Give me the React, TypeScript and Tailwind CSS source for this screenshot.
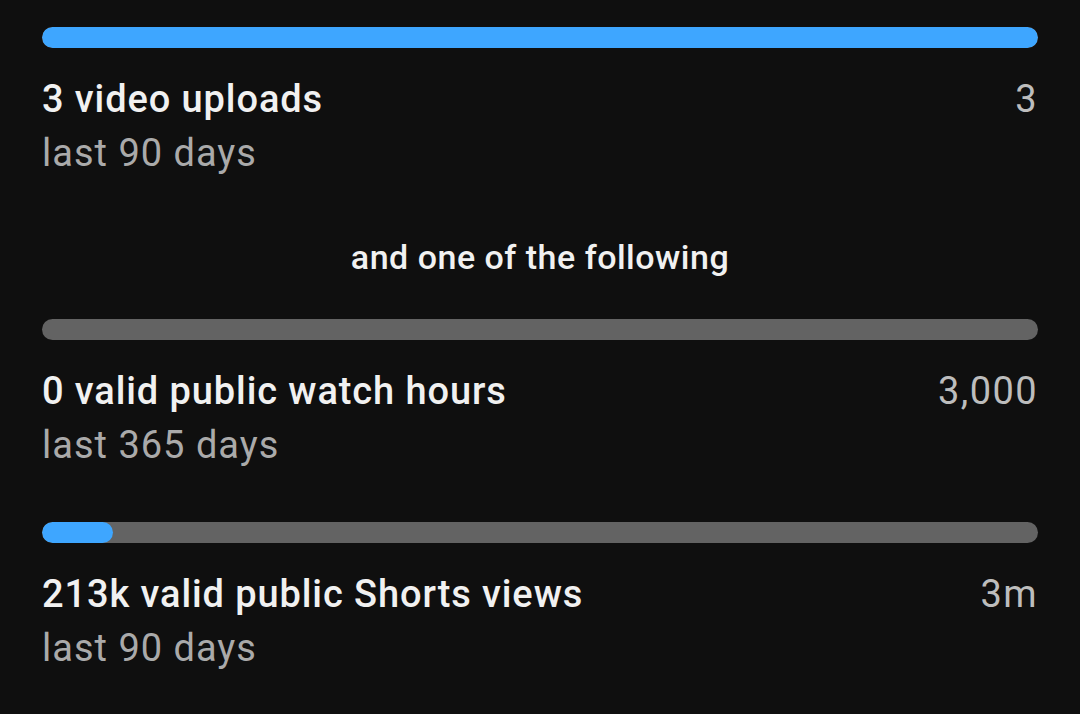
const font = { fontFamily: 'Roboto, "Noto Sans", sans-serif' }

type Req = {
  title: string
  period: string
  target: string
  progress: number
}

const rows: Req[] = [
  { title: '0 valid public watch hours', period: 'last 365 days', target: '3,000', progress: 0 },
  { title: '213k valid public Shorts views', period: 'last 90 days', target: '3m', progress: 7.1 },
]

function Bar({ progress }: { progress: number }) {
  return (
    <div className="h-[21px] w-full rounded-full bg-[#636363] overflow-hidden">
      {progress > 0 && (
        <div className="h-full rounded-full bg-[#3ea6ff]" style={{ width: `${progress}%` }} />
      )}
    </div>
  )
}

function Requirement({ title, period, target, progress }: Req) {
  return (
    <div>
      <Bar progress={progress} />
      <div className="flex items-start justify-between mt-[27px]">
        <div>
          <div className="text-[38px] leading-[48px] font-medium tracking-[0.9px] text-[#f1f1f1]">{title}</div>
          <div className="mt-[6px] text-[38px] leading-[48px] tracking-[1px] text-[#aaaaaa]">{period}</div>
        </div>
        <div className="text-[38px] leading-[48px] tracking-[1.4px] text-[#bdbdbd]">{target}</div>
      </div>
    </div>
  )
}

export default function App() {
  return (
    <div className="w-[1080px] h-[714px] bg-[#0f0f0f] px-[42px] pt-[27px] overflow-hidden" style={font}>
      <Requirement title="3 video uploads" period="last 90 days" target="3" progress={100} />

      <div className="mt-[58px] text-center text-[34px] leading-[44px] font-medium tracking-[0.5px] text-[#f1f1f1]">
        and one of the following
      </div>

      <div className="mt-[40px] flex flex-col gap-[53px]">
        {rows.map((r) => (
          <Requirement key={r.title} {...r} />
        ))}
      </div>
    </div>
  )
}
